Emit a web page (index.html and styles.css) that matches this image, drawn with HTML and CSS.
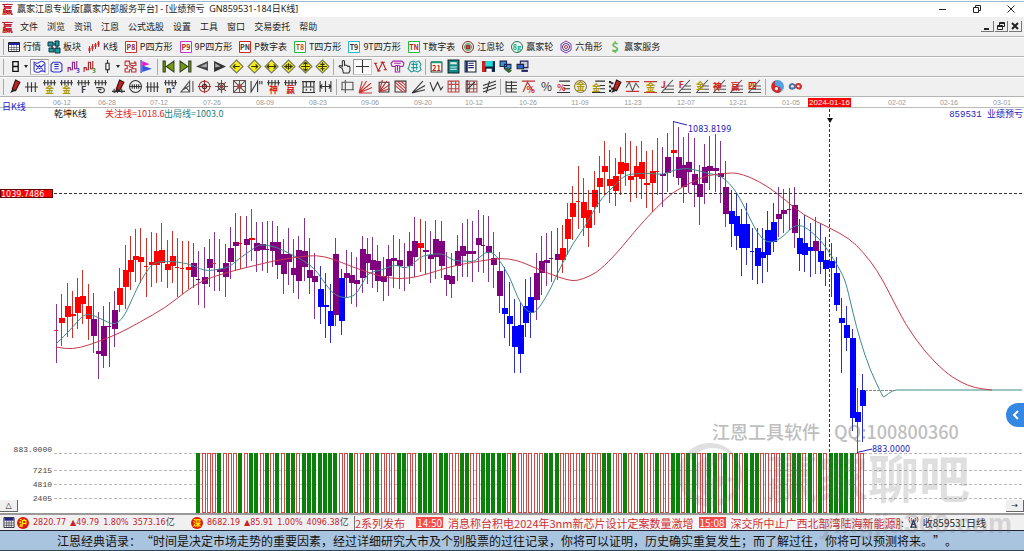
FILE: index.html
```html
<!DOCTYPE html>
<html lang="zh-CN">
<head>
<meta charset="utf-8">
<title>赢家江恩专业版</title>
<link rel="stylesheet" href="styles.css">
</head>
<body>
<div class="app">
  <header class="titlebar">
    <span class="brand">赢</span>
    <h1 class="title">赢家江恩专业版[赢家内部服务平台] - [业绩预亏&nbsp; GN859531-184日K线]</h1>
    <div class="winctl">
      <button aria-label="最小化"><svg viewBox="0 0 10 10"><path d="M1 5.5h7" /></svg></button>
      <button aria-label="还原"><svg viewBox="0 0 10 10"><path d="M1.5 3.5h5v5h-5zM3.5 3V1.500h5v5H7" /></svg></button>
      <button aria-label="关闭"><svg viewBox="0 0 10 10"><path d="M1.500 1.500l7 7M8.500 1.500l-7 7" /></svg></button>
    </div>
  </header>

  <nav class="menubar">
    <span class="brand">赢</span>
    <button>文件</button><button>浏览</button><button>资讯</button><button>江恩</button><button>公式选股</button><button>设置</button><button>工具</button><button>窗口</button><button>交易委托</button><button>帮助</button>
    <div class="mdictl">
      <button aria-label="最小化"><svg viewBox="0 0 10 10"><path class="bold" d="M2 8h5" /></svg></button>
      <button aria-label="还原"><svg viewBox="0 0 10 10"><path d="M1.500 4.500h5v4h-5zM1.500 5.500h5M3.500 4V1.500h5v4H7M3.500 2.500h5" /></svg></button>
      <button aria-label="关闭"><svg viewBox="0 0 10 10"><path class="bold" d="M2 2l6 6M8 2l-6 6" /></svg></button>
    </div>
  </nav>

  <div class="toolbar modules" id="modules"></div>
  <div class="toolbar" id="periods"></div>
  <div class="toolbar" id="drawing"></div>

  <main class="chart">
    <svg class="plot" id="plot" viewBox="0 97 1024 416" role="img" aria-label="日K线"></svg>
    <button class="corner left" aria-label="展开">△</button>
    <button class="corner right" aria-label="向右">→</button>
    <button class="drawer" aria-label="侧栏"><svg viewBox="0 0 18 24"><path d="M12 8l-4 4 4 4" /></svg></button>
  </main>

  <footer class="status">
    <svg class="cal" viewBox="0 0 12 12"><path fill="#fff" stroke="#223" d="M.5.5h11v11H.5z"/><path fill="#228" d="M1 1h10v3H1z"/><path stroke="#223" d="M3.500 4v7M6 4v7M8.500 4v7M1 6.500h10M1 9h10" stroke-width=".7"/></svg>
    <div class="index"><b>沪</b><span>2820.77</span><span>▲49.79</span><span>1.80%</span><span>3573.16<i>亿</i></span></div>
    <div class="index"><b>深</b><span>8682.19</span><span>▲85.91</span><span>1.00%</span><span>4096.38<i>亿</i></span></div>
    <div class="ticker"><span>2系列发布</span><time>14:50</time><span>消息称台积电2024年3nm新芯片设计定案数量激增</span><time>15:08</time><span class="last">深交所中止广西北部湾陆海新能源股</span></div>
    <div class="feed"><span>:</span><svg viewBox="0 0 12 14"><path fill="none" stroke="#c33" d="M2 1Q0 4 2 7M10 1q2 3 0 6M4 2Q3 4 4 6M8 2q1 2 0 4"/><path fill="none" stroke="#235" stroke-width="1.500" d="M6 4L3 13M6 4l3 9M4 9h4M3 12h6"/></svg><span>收859531日线</span></div>
  </footer>
  <p class="quote">江恩经典语录：<span class="open">“</span>时间是决定市场走势的重要因素，经过详细研究大市及个别股票的过往记录，你将可以证明，历史确实重复发生；而了解过往，你将可以预测将来。<span class="close">”</span>。</p>
</div>
<script src="app.js"></script>
</body>
</html>
```
FILE: styles.css
```css
* { box-sizing: border-box; }
body {
  margin: 0;
  background: #fff;
  color: #222;
  font: 9px/12px "Noto Sans CJK SC", sans-serif;
}
button {
  margin: 0;
  padding: 0;
  border: 0;
  background: none;
  color: inherit;
  font: inherit;
}
svg { display: block; }
.app { display: flex; flex-direction: column; min-height: 100vh; }

.titlebar {
  display: flex;
  align-items: center;
  height: 17px;
  padding: 0 8px 0 2px;
  border-top: 1px solid #fff;
  box-shadow: inset 0 1px #9db9d2;
}
.title {
  flex: 1;
  margin: 0;
  font: 400 9px/12px "Noto Sans", "Noto Sans CJK SC", sans-serif;
  white-space: nowrap;
}
.brand {
  width: 15px;
  color: #c0182c;
  font: 900 11px/14px "Noto Sans CJK SC", sans-serif;
}
.winctl { display: flex; gap: 24px; }
.winctl svg, .mdictl svg { width: 10px; height: 10px; fill: none; stroke: #222; }
.bold { stroke-width: 2; }

.menubar {
  display: flex;
  align-items: center;
  gap: 9px;
  height: 20px;
  padding: 0 2px;
  background: #f0f0f0;
  border-bottom: 1px solid #b4b4b4;
}
.menubar .brand { margin-right: -6px; }
.mdictl { display: flex; gap: 1px; margin-left: auto; }
.mdictl button { padding: 0 1px; border-right: 1px solid #777; border-bottom: 1px solid #777; }

.toolbar {
  display: flex;
  align-items: center;
  height: 20px;
  padding-left: 3px;
  background: #f0f0f0;
  border-bottom: 1px solid #b4b4b4;
  box-shadow: inset 0 1px #fff;
}
.toolbar svg { width: 13px; height: 13px; overflow: visible; }
.group { display: flex; padding-left: 2px; border-left: 1px solid #aaa; height: 16px; margin-right: 1px; }
.group + .group { margin-left: 1px; }
.group button { flex: 1; display: flex; align-items: center; justify-content: center; gap: 2px; }
.group button.wide { flex: 0 0 24px; }
.group button.on { background: #fafafa; border: 1px solid #ccc; border-top-color: #999; border-left-color: #999; }
.w152 { width: 152px; } .w173 { width: 174px; } .w88 { width: 90px; } .w106 { width: 106px; }
.w329 { width: 331px; } .w159 { width: 162px; } .w261 { width: 263px; } .w37 { width: 40px; }
.caret { border: 2px solid transparent; border-top: 3px solid #222; border-bottom: 0; }
.modules .group { width: auto; gap: 7px; padding-left: 4px; }
.modules .group button { flex: none; gap: 3px; white-space: nowrap; }
.modules svg { width: 12px; height: 12px; }

.chart { position: relative; z-index: 1; }
.plot { width: 100%; overflow: visible; pointer-events: none; }
.plot text { font-family: "Noto Sans CJK SC", sans-serif; }
.plot .date { font: 7px "Liberation Sans", sans-serif; fill: #999; text-anchor: middle; }
.plot .date.now { font-size: 8px; fill: #fff; }
.plot .num { font: 8px "DejaVu Sans", sans-serif; fill: #22b; }
.plot .mono { font: 8px "Liberation Mono", monospace; fill: #444; text-anchor: end; }
.plot .blue { font: 9px "Liberation Mono", "Noto Sans CJK SC", monospace; fill: #22b; text-anchor: end; }
.plot .label { font-size: 9px; }
.mark { fill: #666; opacity: .42; }
.mark .line { font-size: 18px; font-weight: 500; }
.logo { fill: #666; opacity: .2; }
.logo .name { font-size: 51px; font-weight: 700; }
.plot .site { font: 700 27px "Liberation Sans", sans-serif; text-anchor: end; }
.corner {
  position: absolute;
  bottom: 1px;
  width: 18px;
  height: 12px;
  background: #f0f0f0;
  border-right: 1px solid #666;
  border-bottom: 1px solid #666;
  font: 8px/10px "DejaVu Sans", sans-serif;
}
.left { left: 0; }
.right { right: 0; }
.drawer {
  position: absolute;
  right: 0;
  top: 306px;
  width: 18px;
  height: 24px;
  border-radius: 12px 0 0 12px;
  background: #3487e3;
}
.drawer svg { width: 18px; height: 24px; fill: none; stroke: #fff; stroke-width: 2; }

.status {
  display: flex;
  align-items: center;
  height: 17px;
  padding: 0 3px;
  background: #f0f0f0;
  border-top: 2px solid #999;
  white-space: nowrap;
}
.cal { flex: none; width: 12px; height: 11px; margin-right: 2px; }
.index {
  flex: 0 0 174px;
  display: flex;
  align-items: center;
  gap: 4px;
  color: #c8202c;
  font: 8px/12px "DejaVu Sans", sans-serif;
  overflow: hidden;
}
.index + .index { flex-basis: 163px; }
.index b {
  width: 12px;
  height: 12px;
  border-radius: 50%;
  background: #e01808;
  color: #ff0;
  text-align: center;
  font: 700 8px/12px "Noto Sans CJK SC", sans-serif;
}
.index i { color: #444; font: 9px/12px "Noto Sans CJK SC", sans-serif; }
.ticker {
  flex: 0 1 546px;
  display: flex;
  align-items: center;
  gap: 5px;
  height: 14px;
  overflow: hidden;
  border-left: 1px solid #777;
  background: #f6f6f6;
  color: #cf3038;
  font-size: 11px;
}
.ticker .last { flex: 1; overflow: hidden; }
.ticker time { padding: 0 1px; background: #f84848; color: #fff; font-size: 10px; line-height: 11px; }
.ticker time:first-of-type { margin-left: 6px; }
.feed { display: flex; align-items: center; gap: 4px; padding-left: 1px; font-size: 10px; }
.feed svg { width: 11px; height: 13px; }
.quote {
  margin: 0;
  padding: 0 57px;
  height: 21px;
  background: #a9c4df;
  border-top: 1px solid #223;
  border-bottom: 1px solid #345;
  color: #111;
  font-size: 12px;
  line-height: 19px;
  white-space: nowrap;
  overflow: hidden;
}
.open, .close { display: inline-block; width: 12px; }
.open { text-align: right; }
```
FILE: app.js
```js
/* ---------- icon helpers, drawn on a 12 x 12 grid ---------- */
const line = (d, c = '#333', w = 1) => `<path d="${d}" fill="none" stroke="${c}" stroke-width="${w}"/>`;
const area = (d, c, s = 'none') => `<path d="${d}" fill="${c}" stroke="${s}"/>`;
const glyph = (t, c, size = 8, x = 6, y = 11) =>
  `<text x="${x}" y="${y}" fill="${c}" font-size="${size}" font-weight="700" text-anchor="middle">${t}</text>`;
const svg = body => `<svg viewBox="0 0 12 12" aria-hidden="true">${body}</svg>`;
const ring = (r, c, w = 1) => `<circle cx="6" cy="6" r="${r}" fill="none" stroke="${c}" stroke-width="${w}"/>`;

const comb = line('M0 2.500h12M1.500 0v5M4.500 0v5M7.500 0v5M10.500 0v5');
const pencil = area('M4 8L7 0l4 2-4 8z', '#b22', '#311') + area('M4 8l3 2-5 2z', '#222');
const diamond = area('M6 0l6 6-6 6-6-6z', '#f3ee20', '#776');
const steps = line('M0 11.500h12M3 8.500h9M6 5.500h6M1 11L11 0', '#555');
const boxed = (t, frame, ink) => area('M.5.5h11v11H.5z', '#fff', frame) + glyph(t, ink, 7, 6, 8.500);

/* ---------- module bar ---------- */
const modules = [
  ['行情', area('M.5 1.500h11v9H.5z', '#fff', '#223') + area('M1 2h10v2H1z', '#22a') + line('M3.500 4v6M6 4v6M8.500 4v6M1 6.500h10M1 8.500h10', '#445', .6)],
  ['板块', area('M0 1h5v4H0zM7 0h4v5H7zM1 7h5v4H1zM7 7h5v5H7z', '#18a0a0', '#134') + line('M5 3h3M4 5v3M9 5v3', '#123')],
  ['K线', line('M1.500 5v7M4.500 3v7M7.500 2v6M10.500 0v6', '#c22') + line('M1.500 7v3M4.500 5v3M7.500 3v3M10.500 1v3', '#c22', 2)],
  ['P四方形', boxed('P8', '#c33', '#822')],
  ['9P四方形', boxed('P9', '#c3c', '#a22')],
  ['P数字表', boxed('PN', '#c22', '#333')],
  ['T四方形', boxed('T8', '#2b4', '#a52')],
  ['9T四方形', boxed('T9', '#2bc', '#333')],
  ['T数字表', boxed('TN', '#2b4', '#a22')],
  ['江恩轮', ring(5.500, '#822') + ring(3.500, '#2a5') + ring(1.500, '#a22', 2)],
  ['赢家轮', ring(5.500, '#275') + glyph('8g', '#2a6', 7, 6, 8.500)],
  ['六角形', area('M6 0l5 3v6l-5 3-5-3V3z', '#fff', '#73b') + ring(3.500, '#338') + ring(1.500, '#c22')],
  ['赢家服务', glyph('$', '#6b6', 13)]
];
document.getElementById('modules').innerHTML =
  `<div class="group">${modules.map(([t, b]) => `<button>${svg(b)}<span>${t}</span></button>`).join('')}</div>`;

/* ---------- icon bars ---------- */
const bar = (id, groups) => {
  document.getElementById(id).innerHTML = groups.map(([w, items]) =>
    `<div class="group ${w}">${items.map((it, n) => {
      const o = typeof it === 'string' ? { b: it } : it;
      return `<button class="${o.k || ''}" aria-label="${id} ${n + 1}">${svg(o.b)}${o.c ? '<span class="caret"></span>' : ''}</button>`;
    }).join('')}</div>`).join('');
};
const arrows = d => diamond + line(d, '#330', 1);

bar('periods', [
  ['w152', [
    { b: line('M3 1.500h6M3 6h6M3 10.500h6M3.500 1v10M8.500 1v10', '#111', 1.200), k: 'wide', c: 1 },
    { b: line('M1 2q3 2 5 0q3-2 5 1v8q-3-2-5 0q-3 1-5-1zM2 4l4 4 4-4M3 9l3-4 3 4', '#33c'), k: 'on' },
    line('M3 2h6l2 2v6l-2 1H3l-2-1V4zM4 4h4M4 6h4M4 8h4', '#33c'),
    line('M1 11V7h2v2h2V2h2v6h2V1', '#828') + glyph('3', '#33c', 6, 10, 12),
    line('M1 11V7h2v2h2V2h2v6h2V1', '#a22') + glyph('3', '#282', 6, 10, 12),
    { b: line('M6 0v12') + area('M4.500 3h3v6h-3z', '#fff', '#222'), k: 'wide', c: 1 },
    line('M1 1h4v2h5V1M1 1v4h2v3H1v3h4V9h2v2h4V8H8V5h3V2M4 5l4 3M5 4l4 2', '#b33'),
    area('M1 0v12', '#000', '#22c') + area('M2 1l7 3-7 2z', '#d2c') + area('M2 5l9 3-9 3z', '#35d')
  ]],
  ['w173', [
    area('M1 1h2v10H1zM11 1v10L4 6z', '#791', '#342'), area('M9 1h2v10H9zM1 1v10l7-5z', '#791', '#342'),
    area('M11 1v9L0 6z', '#444') + area('M10 3v4L4 6z', '#aaa'), area('M1 1v10l11-5z', '#333') + area('M2 3v4l5-1z', '#aaa'),
    arrows('M3 6h6M5 4L3 6l2 2'), arrows('M3 6h6M7 4l2 2-2 2'), arrows('M2 6h8M4 4L2 6l2 2M8 4l2 2-2 2'),
    arrows('M2 6h8M5 4L3 6l2 2M7 4l2 2-2 2M6 3v6'), arrows('M6 2v8M2 6h8M4 4l2-2 2 2M4 8l2 2 2-2'), arrows('M6 2v8M2 6h8M4 4h4M4 8h4')
  ]],
  ['w88', [
    line('M4 8L1 6q0-2 3 0V1q1-1 2 0v4q2-1 3 1 2-1 2 1v3l-1 2H5z'),
    { b: line('M6 0v12M0 6h12'), k: 'on' },
    line('M1 3l3 7 4-8 3 7', '#b22') + line('M0 3h3M3 10h3M6 2h4M9 9h3', '#a22'),
    line('M2 1h8l2 2-1 3H8v5H4V6H1L0 3zM3 3h6M4 5h4M6 5v5', '#a2a'),
    line('M2 2l3-1 2 1 3-1 2 3-1 2 1 3-3 2-3-1-3 1-3-3 1-2zM3 4h6M3 7h6M5 2v8M8 3v6', '#299')
  ]],
  ['w106', [
    area('M1 2h10v9H1z', '#fff', '#243') + area('M1 1h10v2H1z', '#297') + glyph('21', '#c22', 7, 6, 10),
    area('M1 0h10v12H1z', '#188', '#122') + area('M3 2h6v2H3z', '#ded') + line('M3 6.500h6M3 8.500h6', '#dff'),
    area('M1 1h10v10H1z', '#fff', '#123') + line('M4 3h5M4 5h5M4 7h5', '#226') + line('M2.500 1v10', '#226', 2),
    area('M0 1h12v10H0z', '#124') + area('M0 1h3v10H0z', '#c22') + area('M3 1h7v5H3z', '#2dd') + area('M4 8h5v3H4z', '#fff'),
    area('M1 1h6v5H1zM5 4h6v4H5z', '#39c', '#225') + area('M5 9l3-2 4 3-3 2z', '#363'),
    area('M4 1h7v6H4z', '#ccd', '#225') + area('M1 4h6v4H1z', '#36c', '#223') + area('M5 9h6v2H5z', '#226')
  ]]
]);

bar('drawing', [
  ['w329', [
    pencil, line('M0 6.500h12M2.500 2v9M6 2v9M9.500 2v9'),
    comb + glyph('金', '#a90', 8, 6, 12), comb + glyph('金', '#a90', 8, 6, 12), comb + glyph('F', '#333', 8, 6, 12),
    comb + line('M2 7h5q4 1 2 4-3 2-5-1 0-2 3-1'), pencil + line('M0 10.500h12M2 8v4M5 9v3M9 8v4'),
    ring(5.500, '#333') + line('M0 6h12M3 4v4M5 4v4M7 4v4M9 4v4'), line('M0 6.500h12M1.500 2v9M4.500 2v9M7.500 2v9M10.500 2v9'),
    comb + glyph('n²', '#333', 8, 6, 12), line('M0 11L8 1v10zM11 1v10M4 6l4 5M2 9l6-4', '#555'),
    ring(5, '#944') + line('M6 0v12M0 6h12', '#b22') + ring(2, '#333'),
    line('M6 0v12M0 6h12M2 2l8 8M10 2l-8 8', '#844') + ring(3, '#444'),
    line('M.5.5h11v11H.5zM1 1l10 10M11 1L1 11M6 0v12M0 6h12', '#655') + area('M4 4h4v4H4z', '#a44'),
    line('M1 1v10L7 1v10M9 1v3M11 1v3'), comb + glyph('神', '#d22', 8, 6, 12), comb + glyph('赢', '#c22', 8, 6, 12),
    line('M0 1.500h12M0 11.500h12M1 2v9M11 2v9M1 6.500h10M4 2v4M8 2v4M4 8v2M8 8v2', '#333'), line('M1 1v10M11 1v10M6 1v10M1 6h10M3 4L1 6l2 2M9 4l2 2-2 2')
  ]],
  ['w159', [
    line('M1 2h3v7H1zM4 2h7v7H4zM0 9h12M4 0v12', '#555'),
    line('M0 12L3 1M0 12L7 1M0 12L11 3M0 12l12-5M0 12h12', '#c33'),
    line('M2 2h9v9H2z', '#333') + line('M2 11L5 0M2 11L9 1M2 11l10-7M2 11l10-3', '#b33'),
    line('M1 1h10v10H1z') + line('M1 2l10 9M3 1l8 7M6 1l5 4M1 5l7 6', '#c33'),
    line('M0 12L10 1M0 12l12-7M0 12l12-3'), line('M0 2l3 8 4-8 3 7 2-3'),
    line('M1 1h10v10H1zM4 1v10M8 1v10M1 4h10M1 8h10', '#b44'),
    line('M1 1h10v10H1zM4 1v10M8 1v10M1 4h10M1 8h10', '#955') + line('M2 0v12M3 8l6-6'),
    line('M0 5l12-4M0 8l12-4M0 11l12-4M3 12L6 1')
  ]],
  ['w261', [
    line('M1 1v10M6 1v10M1 2h10M1 5h10M1 8h10M1 11h10'),
    line('M0 1h12M1 11L5 2l5 8', '#b33') + glyph('%', '#c22', 8, 8, 12), `<text x="6" y="10" fill="#333" font-size="11" text-anchor="middle">%</text>`,
    line('M2 1h10M6 5h6M6 8h6M0 11.500h12') + glyph('%', '#c22', 8, 4, 10),
    ring(5.500, '#874') + glyph('金', '#a90', 9, 6, 9),
    line('M3 1h9M7 5h5M7 8h5M0 11.500h12') + glyph('金', '#a90', 8, 4, 10),
    line('M1 1v2M1 5v2M1 9v2M3 2v2M3 7v2', '#222', 2) + pencil,
    line('M0 1.500h12M0 10.500h12', '#c33') + line('M0 7l3-5 3 8 3-7 3 4', '#555'),
    line('M0 1.500h12M0 11.500h12', '#c33') + glyph('金', '#a90', 9, 6, 10),
    steps + glyph('J', '#c22', 8, 2, 7), steps + glyph('F', '#c22', 8, 3, 7), steps + glyph('金', '#a90', 8, 4, 8),
    steps + glyph('神', '#c22', 8, 4, 9), steps + glyph('赢', '#c22', 8, 5, 9), steps + glyph('四', '#c22', 8, 4, 8)
  ]],
  ['w37', [
    `<circle cx="6" cy="6" r="6" fill="#4fa2e8"/>` + area('M7 0A6 6 0 0 0 6 12 3 3 0 0 0 6 6 3 3 0 0 1 7 0z', '#d22') + `<circle cx="5" cy="8" r="1.500" fill="#fff"/>`,
    line('M6 6Q3 2 1 5q-1 3 2 3 2 0 3-2', '#47a', 2) + line('M6 6q1-3 4-2 2 2 0 4-2 0-4-2', '#c33', 2)
  ]]
]);

/* ---------- price series: colour, high, body top, body bottom, low ---------- */
const series = `p304,330,331,363 r294,318,323,346 r283,306,317,337 r291,314,316,338 r278,297,313,329 r270,296,304,324 r284,306,319,340
p293,319,336,353 p312,351,354,379 p306,326,356,368 p302,326,327,367 p291,310,329,347 r268,288,305,312 r245,270,287,309 r236,260,272,290
r229,256,260,282 r228,257,262,283 r238,266,267,297 r232,262,265,287 r233,251,265,283 r223,250,263,282 r240,264,270,288 r231,256,266,283
r238,267,268,297 r241,268,269,294 r241,267,270,289 p243,263,277,288 p251,279,280,305 p247,277,284,308 p239,259,268,287 p232,263,264,291
p239,269,272,291 p244,263,277,297 p227,248,262,279 p213,242,246,271 r216,243,244,269 p216,239,245,268 r209,238,240,261 p222,243,251,272
p222,244,250,271 p221,249,250,273 p221,242,251,267 p226,242,265,279 p239,254,274,294 p228,254,262,285 p239,268,275,293 p236,250,281,299
p218,251,267,281 p238,270,278,294 p253,276,282,319 b266,289,307,324 b273,305,307,338 b284,311,326,343 p238,254,315,326 b269,278,321,335
p250,273,278,297 p252,275,283,304 p257,280,284,307 p236,249,278,293 p238,254,263,284 p237,260,270,288 p245,261,281,292 p257,276,282,301
p245,259,276,296 p235,258,261,288 p239,260,266,289 p243,267,268,291 p232,251,266,284 p217,241,257,277 r219,243,248,272 p221,250,252,274
p231,255,259,283 p220,239,257,279 p221,241,266,278 p252,275,280,296 p253,276,284,298 p235,251,266,281 p223,246,256,277 p219,251,254,277
p221,251,254,282 p210,238,245,272 p215,245,246,273 p216,246,253,282 p232,258,265,288 p252,271,296,313 b267,308,314,338 b282,316,324,346
b299,326,347,373 b303,325,354,373 b279,306,323,337 b277,297,313,338 p253,273,300,320 p236,261,273,295 p233,260,263,286 p231,258,259,282
p228,254,260,280 r225,248,260,273 r203,219,239,255 r186,203,217,240 r166,201,202,229 r178,202,218,236 r190,210,228,247 r171,190,207,225
r156,178,187,213 r141,166,172,195 r150,179,186,203 r158,176,191,206 r147,162,174,195 r133,163,171,186 r141,176,180,202 r146,166,177,198
r141,162,179,199 r151,183,185,208 r150,171,183,212 r138,171,172,195 p147,174,176,207 p133,157,173,192 r121,150,153,177 p127,157,178,185
p137,165,187,203 p133,162,172,193 p138,174,185,207 p165,184,197,225 p144,167,183,204 p136,166,171,190 p134,168,171,192 p141,173,177,203
p161,187,214,227 b190,211,224,247 b194,216,236,250 b209,224,248,276 b203,224,248,265 b228,251,252,280 b228,248,266,284 b228,252,258,283
b211,230,255,272 b203,222,242,252 p187,214,219,237 p189,210,214,233 p188,209,210,230 p187,205,233,248 b219,238,254,271 b215,243,255,272
b223,247,251,277 p217,241,251,274 b224,251,262,274 b237,260,269,286 b243,261,268,297 b257,273,305,311 b298,318,323,373 b306,325,338,351
b329,338,418,431 b388,412,422,453 b374,390,406,442`.split(/\s+/);

const volume = 'GRRRGRRRGRGGRGRGRGGRGGGGGGGRR' + 'GRRGRGRRRGGRRGGGRGGRRGGRRGGGGGRGRRRRRGGGRRRRGRRRGGRRGRRGRRGRRGG' +
  'RGGRRGGRGRGRGGGRRRRGRGGRGRGRGGGGGRR';

const ink = { r: '#f00', p: '#800080', b: '#00f' };
const wickInk = { r: '#c8342c', p: '#84358c', b: '#3030b8' };
const px = i => Math.round(56 + i * 5.27);

let out = '';
const rect = (x, y, w, h, f, extra = '') => `<rect x="${x}" y="${y}" width="${w}" height="${h}" fill="${f}" ${extra}/>`;
const dash = (y, c) => `<path d="M54 ${y}H1023" stroke="${c}" stroke-dasharray="3 2"/>`;
const text = (x, y, t, cls, fill) => `<text x="${x}" y="${y}" class="${cls}"${fill ? ` fill="${fill}"` : ''}>${t}</text>`;

/* date axis */
out += '<path d="M0 107.500H1024" stroke="#bbb"/>';
[['06-12', 62], ['06-28', 107], ['07-12', 159], ['07-26', 212], ['08-09', 265], ['08-23', 318], ['09-06', 370], ['09-20', 423], ['10-12', 474],
 ['10-26', 528], ['11-09', 580], ['11-23', 633], ['12-07', 686], ['12-21', 738], ['01-05', 791], ['02-02', 897], ['02-16', 949], ['03-01', 1002]]
  .forEach(([t, x]) => { out += text(x, 105, t, 'date'); });
out += rect(808, 98, 43, 9, '#f00') + text(829.5, 105, '2024-01-16', 'date now');

/* grid and labels */
out += [453.5, 470.5, 484.5, 498.5].map(y => dash(y, '#bbb')).join('');
out += text(52, 452, '883.0000', 'mono') + text(52, 473, '7215', 'mono') + text(52, 487, '4810', 'mono') + text(52, 501, '2405', 'mono');
out += text(2, 110, '日K线', 'label', '#22c') + text(54, 117, '乾坤K线', 'label', '#111') +
  text(105, 117, '关注线=1018.6', 'label', '#d22') + text(164, 117, '出局线=1003.0', 'label', '#188080');
out += text(1023, 117, '859531 业绩预亏', 'blue');

/* volume */
[...volume].forEach((v, n) => {
  const x = px(n + 27);
  out += v === 'G' ? rect(x - 2, 453, 4, 60, '#0a820a') : rect(x - 1.5, 453.5, 3, 59, '#fff', 'stroke="#cc4a4a"');
});

/* candles */
series.forEach((s, i) => {
  const k = s[0], [hi, top, bot, lo] = s.slice(1).split(',').map(Number), x = px(i);
  const wick = i === 152 ? '#c8342c' : wickInk[k];
  out += rect(x, hi, 1, lo - hi, wick) + rect(x - 2, top, bot - top > 1 ? 6 : 4, bot - top, i === 0 || i === 30 ? '#c33' : ink[k]);
});

/* smooth curve through the given points */
const curve = (str, c) => {
  const p = str.split(' ').map(s => s.split(',').map(Number));
  let d = `M${p[0]}`;
  for (let i = 1; i < p.length - 1; i++) d += `Q${p[i]} ${(p[i][0] + p[i + 1][0]) / 2},${(p[i][1] + p[i + 1][1]) / 2}`;
  return `<path d="${d}L${p[p.length - 1]}" fill="none" stroke="${c}"/>`;
};
out += curve('56,344 65,335 73,327 82,316 88,314 93,315 103,320 112,324 118,323 125,315 133,297 140,282 150,266 157,262 167,261 187,263 200,269 208,271 220,269 230,267 237,260 253,249 260,244 277,247 290,254 303,260 315,269 322,279 332,293 342,298 352,297 358,292 365,278 370,272 383,270 395,264 403,268 410,267 420,257 427,255 443,253 453,261 467,261 475,262 485,252 492,252 498,258 510,277 520,304 532,315 540,307 550,290 560,268 573,243 585,227 595,208 603,197 610,190 617,183 623,177 630,174 650,173 663,175 673,170 687,168 700,171 710,174 720,175 730,184 737,193 747,212 757,233 767,243 777,241 787,233 793,226 802,225 813,233 823,243 833,258 843,275 847,287 853,313 860,340 870,370 883,397 884,397 893,390 900,390 1022,390', '#3c8c8c');
out += curve('56,347 65,349 80,348 100,341 120,333 140,322 165,308 185,292 200,282 215,276 240,269 257,265 273,261 297,257 317,255 333,259 350,266 367,272 383,277 400,279 417,277 440,270 453,266 480,261 500,258 517,260 533,267 550,274 567,280 577,281 590,276 600,270 617,253 640,225 657,207 673,192 690,183 707,175 730,173 737,173 750,177 767,186 783,198 803,215 830,228 850,239 863,252 877,270 890,294 905,324 925,352 945,372 960,382 975,388 992,390', '#c83848');

/* extremes */
out += '<path d="M673 121.500L687 125M857 452.500L872 449" stroke="#22b" fill="none"/>' + text(688, 132, '1083.8199', 'num') + text(872, 452, '883.0000', 'num');
out += '<path d="M865 390.500h30" stroke="#888" stroke-dasharray="3 1"/>';

/* crosshair */
out += '<path d="M54 193.500H1023M829.500 109V513" stroke="#333" stroke-dasharray="3 2" fill="none"/>' +
  area('M827 118h6l-3 5z', '#111') + rect(.5, 189.5, 52, 8, '#f00', 'stroke="#600"') + '<text class="num" x="1" y="197" style="fill:#fff">1039.7486</text>';

/* watermark */
out += `<g class="mark">${text(712, 439, '江恩工具软件', 'line')}${text(834, 439, 'QQ:100800360', 'line')}</g>`;
out += `<g class="logo"><path fill-rule="evenodd" d="M710 443a32 32 0 1 0 .1 0zM713 448a26 26 0 1 1-.1 0zM692 470q12-20 38-14-22 6-24 24 16-8 30 0-20 4-24 20-18-8-20-30z"/>${text(766, 498, '赢家聊吧', 'name')}${text(1012, 533, 'yingjia360.com', 'site')}</g>`;
document.getElementById('plot').innerHTML = out;
```
